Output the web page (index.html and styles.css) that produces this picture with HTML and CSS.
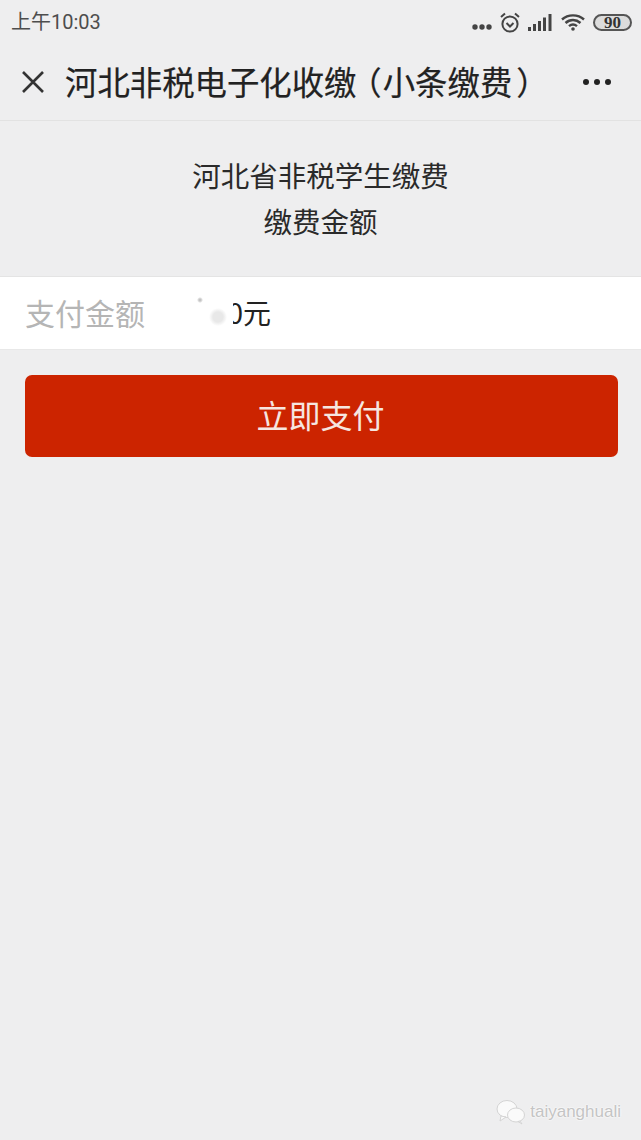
FILE: index.html
```html
<!DOCTYPE html>
<html lang="zh">
<head>
<meta charset="utf-8">
<title>河北非税电子化收缴</title>
<link rel="stylesheet" href="styles.css">
</head>
<body>
<div class="page">
  <div class="status">
    <span class="time">上午10:03</span>
    <div class="status-icons">
      <svg class="ic-dots" width="20" height="6" viewBox="0 0 20 6"><circle cx="3" cy="3" r="2.7"/><circle cx="10" cy="3" r="2.7"/><circle cx="17" cy="3" r="2.7"/></svg>
      <svg class="ic-alarm" width="20" height="21" viewBox="0 0 20 21"><circle cx="10" cy="12" r="7.6"/><path d="M6.5 11 10 14.5 13.5 11"/><path d="M1 5 5 1.5M19 5 15 1.5"/></svg>
      <svg class="ic-signal" width="24" height="17" viewBox="0 0 24 17"><rect x="0" y="13" width="3" height="4"/><rect x="5" y="10" width="3" height="7"/><rect x="10" y="7" width="3" height="10"/><rect x="15" y="3.5" width="3" height="13.5"/><rect x="20.5" y="0" width="3" height="17"/></svg>
      <svg class="ic-wifi" width="24" height="18" viewBox="0 0 24 18"><path d="M1 6.5C7 1 17 1 23 6.5M4.5 10C9 6 15 6 19.5 10M8 13.2C10.5 11 13.5 11 16 13.2"/><circle cx="12" cy="16" r="1.8"/></svg>
      <div class="battery">90</div>
    </div>
  </div>
  <header class="nav">
    <svg class="ic-close" width="26" height="26" viewBox="0 0 26 26"><path d="M3 3 23 23M23 3 3 23"/></svg>
    <h1 class="nav-title">河北非税电子化收缴<span class="paren-open">（</span>小条缴费<span class="paren-close">）</span></h1>
    <svg class="ic-more" width="30" height="8" viewBox="0 0 30 8"><circle cx="4" cy="4" r="3"/><circle cx="15" cy="4" r="3"/><circle cx="26" cy="4" r="3"/></svg>
  </header>
  <div class="intro">
    <p>河北省非税学生缴费</p>
    <p>缴费金额</p>
  </div>
  <div class="amount-row">
    <span class="amount-label">支付金额</span>
    <div class="amount-value">
      <span>0元</span>
      <span class="smudge"></span>
    </div>
  </div>
  <button class="pay">立即支付</button>
  <div class="mark">
    <svg class="ic-wechat" width="30" height="26" viewBox="0 0 30 26"><ellipse cx="11" cy="10" rx="10" ry="8.5"/><path d="M5 17 4 22 10 18Z"/><ellipse cx="20" cy="16" rx="8.5" ry="7"/><path d="M24 22 26 25 22 22.5Z"/></svg>
    <span>taiyanghuali</span>
  </div>
</div>
</body>
</html>
```
FILE: styles.css
```css
* { box-sizing: border-box; }
html, body { margin: 0; padding: 0; }
body {
  background: #eeeeef;
  font-family: "Noto Sans CJK SC", "Liberation Sans", sans-serif;
  color: #222;
}
.page { position: relative; width: 641px; height: 1140px; overflow: hidden; }
.status {
  height: 44px;
  padding: 0 9px 0 11px;
  display: flex;
  align-items: center;
  justify-content: space-between;
}
.time { padding-bottom: 4px; font-family: "Roboto", "Noto Sans CJK SC", sans-serif; font-size: 20px; color: #4d4d4d; }
.status-icons { display: flex; align-items: center; gap: 8px; }
.status-icons svg { display: block; }
.ic-dots { fill: #444; margin-top: 10px; }
.ic-alarm { fill: none; stroke: #444; stroke-width: 2; }
.ic-signal { fill: #444; }
.ic-wifi { margin-left: 1px; fill: none; stroke: #444; stroke-width: 2.4; }
.ic-wifi circle { fill: #444; stroke: none; }
.battery {
  width: 39px;
  height: 17px;
  border: 2px solid #555;
  border-radius: 9px;
  background: #dcdcdc;
  font-family: "Liberation Serif", serif;
  font-weight: 700;
  font-size: 17px;
  line-height: 13px;
  text-align: center;
  color: #333;
}
.nav {
  height: 77px;
  padding: 0 29px 0 20px;
  display: flex;
  align-items: center;
  border-bottom: 1px solid #e2e2e2;
}
.ic-close { flex: none; fill: none; stroke: #333; stroke-width: 2.6; }
.nav-title {
  flex: 1;
  margin: 0 0 4px 19px;
  font-size: 32.4px;
  font-weight: 400;
  white-space: nowrap;
  color: #222;
  -webkit-text-stroke: 0.2px #222;
}
.paren-open { margin: 0 1px 0 9px; font-feature-settings: "halt"; }
.paren-close { margin-left: 4px; font-feature-settings: "halt"; }
.ic-more { flex: none; fill: #222; }
.intro {
  padding-top: 31px;
  text-align: center;
  font-size: 28.5px;
  line-height: 46px;
  color: #2a2a2a;
}
.intro p { margin: 0; }
.amount-row {
  margin-top: 32px;
  height: 74px;
  padding: 0 0 3px 25px;
  display: flex;
  align-items: center;
  background: #fff;
  border-top: 1px solid #e4e4e4;
  border-bottom: 1px solid #e8e8e8;
}
.amount-label { width: 170px; font-size: 30px; color: #b5b5b5; }
.amount-value { position: relative; width: 76px; text-align: right; font-size: 28px; color: #222; }
.smudge {
  position: absolute;
  left: 2px;
  top: 4px;
  width: 36px;
  height: 32px;
  background:
    radial-gradient(circle at 3px 4px, #c4c4c4 0 1px, transparent 3px),
    radial-gradient(circle at 21px 21px, #e8e8e8 0 5px, #fff 9px);
}
.pay {
  display: block;
  margin: 25px 23px 0 25px;
  width: 593px;
  height: 82px;
  padding: 0 2px 5px 0;
  border: 0;
  border-radius: 7px;
  background: #cc2400;
  color: #f6e6e0;
  font-family: inherit;
  font-size: 32px;
}
.mark {
  position: absolute;
  right: 20px;
  bottom: 15px;
  display: flex;
  align-items: center;
  gap: 4px;
  font-family: "Liberation Sans", sans-serif;
  font-size: 17px;
  color: #c4c4c4;
  text-shadow: 0 0 2px #fff, 0 0 2px #fff;
}
.ic-wechat { fill: #fafafa; stroke: #d4d4d4; stroke-width: 1; }
```
